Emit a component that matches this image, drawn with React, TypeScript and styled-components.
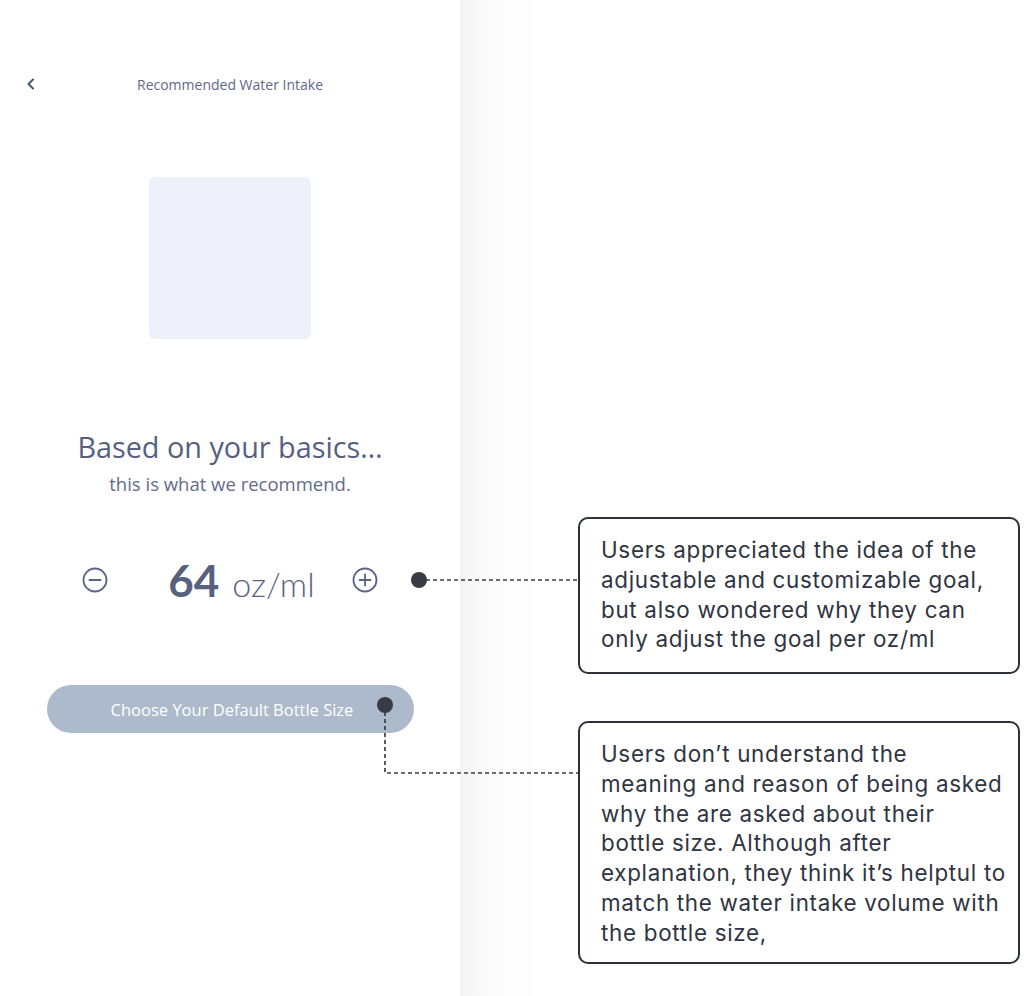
import React from "react"
import styled, { createGlobalStyle } from "styled-components"

const GlobalStyle = createGlobalStyle`
  html, body {
    margin: 0;
    padding: 0;
    background: #ffffff;
  }
`

const Page = styled.div`
  position: relative;
  display: flex;

  width: 1024px;
  height: 996px;
  overflow: hidden;
`

const Phone = styled.section`
  display: flex;
  flex-direction: column;
  align-items: center;

  width: 460px;
  height: 100%;

  background: #ffffff;

  font-family: "Open Sans", "Lato", sans-serif;
  color: #58617f;
`

const Header = styled.header`
  display: grid;
  grid-template-columns: 40px 1fr 40px;
  align-items: center;

  width: 100%;
  height: 24px;
  margin-top: 72px;
  padding: 0 25px;
  box-sizing: border-box;
`

const BackButton = styled.button`
  display: flex;
  align-items: center;

  width: 24px;
  height: 24px;
  padding: 0;

  border: none;
  background: none;
  color: #4a5372;

  cursor: pointer;
`

const Title = styled.h1`
  margin: 0;

  text-align: center;
  font-size: 14px;
  font-weight: 400;
  color: #5f6889;
`

const Illustration = styled.div`
  width: 162px;
  height: 162px;
  margin-top: 81px;

  border-radius: 6px;
  background: #edf0f8;
`

const Heading = styled.h2`
  margin: 91px 0 0;

  font-size: 28.8px;
  line-height: 34px;
  font-weight: 400;
  color: #56607f;
`

const Subheading = styled.p`
  margin: 9px 0 0;

  font-size: 18.5px;
  line-height: 22px;
  color: #636c8a;
`

const Stepper = styled.div`
  display: flex;
  align-items: center;

  height: 48px;
  margin-top: 61px;
`

const StepButton = styled.button`
  display: flex;
  align-items: center;
  justify-content: center;

  width: 26px;
  height: 26px;
  padding: 0;

  border: none;
  background: none;
  color: #5a6386;

  cursor: pointer;
`

const Amount = styled.div<{ $before: number; $after: number }>`
  display: flex;
  align-items: baseline;
  gap: 13px;

  margin: 0 ${ p => p.$after }px 0 ${ p => p.$before }px;

  font-family: "Lato", "Open Sans", sans-serif;
`

const AmountValue = styled.span`
  font-size: 44px;
  font-weight: 700;
  color: #56607f;
`

const AmountUnit = styled.span`
  font-size: 34px;
  font-weight: 300;
  color: #5a6386;
`

const PrimaryButton = styled.button`
  width: 367px;
  height: 48px;
  margin-top: 81px;
  padding: 0 0 0 4px;

  border: none;
  border-radius: 24px;
  background: #adbacb;

  font-family: "Open Sans", "Lato", sans-serif;
  font-size: 16.5px;
  color: #ffffff;

  cursor: pointer;
`

const Notes = styled.aside`
  display: flex;
  flex-direction: column;
  gap: 47px;

  flex: 1;
  padding: 517px 0 0 118px;

  background: linear-gradient(to right, #f3f3f3 0px, #fafafa 24px, #ffffff 80px);
`

const Note = styled.div<{ $height: number }>`
  width: 442px;
  height: ${ p => p.$height }px;
  padding: 16px 10px 0 21px;
  box-sizing: border-box;

  border: 2px solid #2b303a;
  border-radius: 10px;
  background: #ffffff;

  font-family: "Inter", "Noto Sans", sans-serif;
  font-size: 22.4px;
  line-height: 29.8px;
  letter-spacing: 0.7px;
  color: #2f3542;
`

const NoteLine = styled.span`
  display: block;
  white-space: nowrap;
`

const Connectors = styled.svg`
  position: absolute;
  top: 0;
  left: 0;

  pointer-events: none;
`

const CircleIcon: React.FC<{ plus?: boolean }> = ({ plus }) => (
  <svg width="26" height="26" viewBox="0 0 26 26" fill="none" stroke="currentColor" strokeWidth="1.8" strokeLinecap="round">
    <circle cx="13" cy="13" r="11.5" />
    <line x1="7.5" y1="13" x2="18.5" y2="13" />
    { plus && <line x1="13" y1="7.5" x2="13" y2="18.5" /> }
  </svg>
)

const notes = [
  {
    height: 157,
    lines: [
      "Users appreciated the idea of the",
      "adjustable and customizable goal,",
      "but also wondered why they can",
      "only adjust the goal per oz/ml",
    ],
  },
  {
    height: 243,
    lines: [
      "Users don’t understand the",
      "meaning and reason of being asked",
      "why the are asked about their",
      "bottle size. Although after",
      "explanation, they think it’s helptul to",
      "match the water intake volume with",
      "the bottle size,",
    ],
  },
]

const App: React.FC = () => {
  return (
    <Page>
      <GlobalStyle />

      <Phone>
        <Header>
          <BackButton aria-label="Back">
            <svg width="12" height="14" viewBox="0 0 12 14" fill="none" stroke="currentColor" strokeWidth="2" strokeLinecap="round" strokeLinejoin="round">
              <polyline points="8,2.5 3.5,7 8,11.5" />
            </svg>
          </BackButton>
          <Title>Recommended Water Intake</Title>
          <span />
        </Header>

        <Illustration />

        <Heading>Based on your basics…</Heading>
        <Subheading>this is what we recommend.</Subheading>

        <Stepper>
          <StepButton aria-label="Decrease"><CircleIcon /></StepButton>
          <Amount $before={60} $after={37}>
            <AmountValue>64</AmountValue>
            <AmountUnit>oz/ml</AmountUnit>
          </Amount>
          <StepButton aria-label="Increase"><CircleIcon plus /></StepButton>
        </Stepper>

        <PrimaryButton>Choose Your Default Bottle Size</PrimaryButton>
      </Phone>

      <Notes>
        { notes.map((note, i) => (
          <Note key={ i } $height={ note.height }>
            { note.lines.map(line => <NoteLine key={ line }>{ line }</NoteLine>) }
          </Note>
        )) }
      </Notes>

      <Connectors width="1024" height="996" viewBox="0 0 1024 996">
        <g stroke="#3a3e44" strokeWidth="1.7" strokeDasharray="4 3" fill="none">
          <line x1="419" y1="580" x2="578" y2="580" />
          <polyline points="385,705 385,773 578,773" />
        </g>
        <circle cx="419" cy="580" r="8" fill="#383c42" />
        <circle cx="385" cy="705" r="8" fill="#383c42" />
      </Connectors>
    </Page>
  )
}

export default App
